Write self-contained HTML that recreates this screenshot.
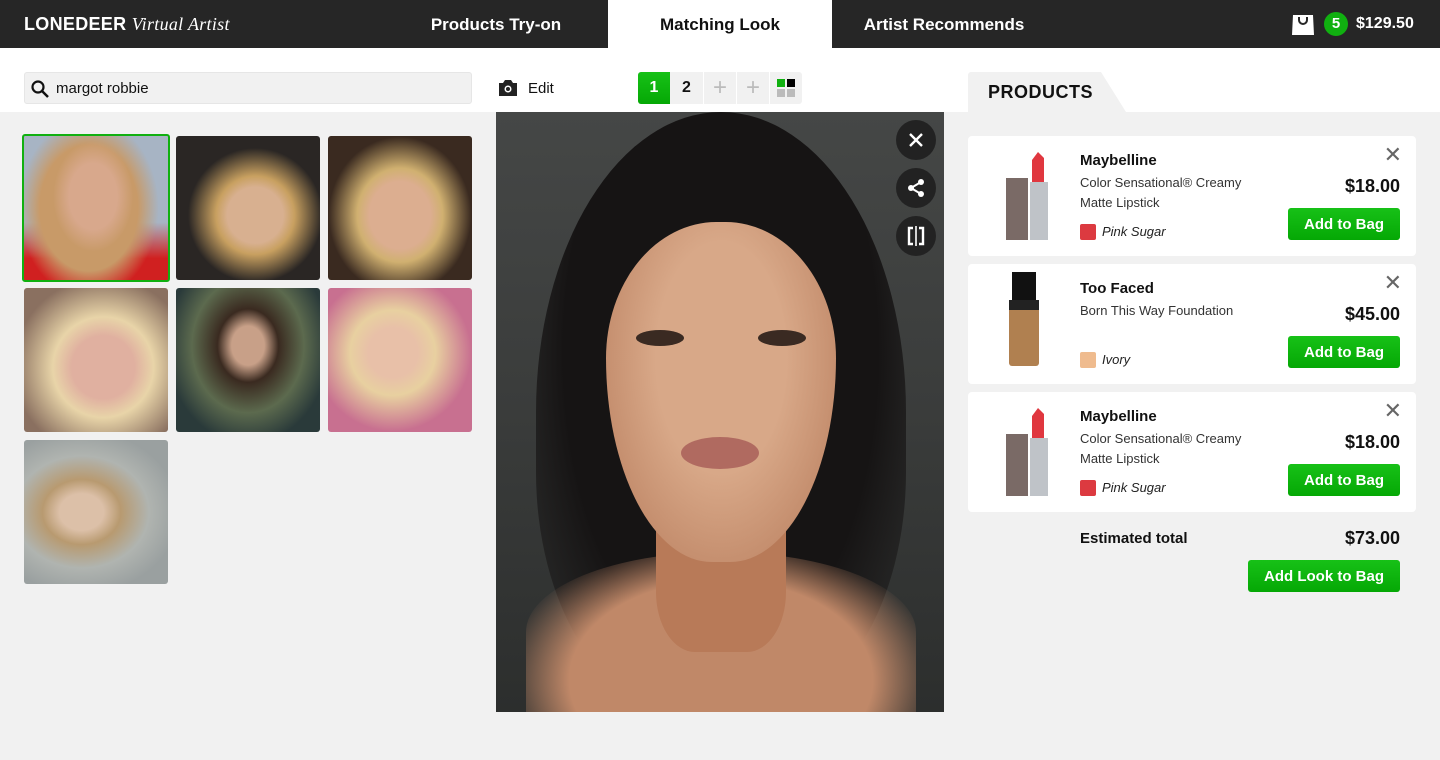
<!DOCTYPE html>
<html style="width:1440px;height:760px;overflow:hidden"><head><meta charset="utf-8"><style>
*{box-sizing:border-box;margin:0;padding:0}
body{width:1440px;height:760px;overflow:hidden;font-family:"Liberation Sans",sans-serif;background:#f1f1f1;position:relative;color:#111}
.hdr{position:absolute;left:0;top:0;width:1440px;height:48px;background:#262626;color:#fff}
.logo{position:absolute;left:24px;top:14px;font-size:18px;font-weight:bold;letter-spacing:.3px}
.logo i{font-family:"Liberation Serif",serif;font-weight:normal}
.nav{position:absolute;top:0;height:48px;width:224px;line-height:49px;text-align:center;font-size:17px;font-weight:bold}
.top{position:absolute;left:0;top:48px;width:1440px;height:64px;background:#fff}
.abs{position:absolute}
.thumb{position:absolute;width:144px;height:144px;border-radius:3px}
.card{position:absolute;left:968px;width:448px;height:120px;background:#fff;border-radius:4px}
.brand{position:absolute;left:112px;top:16px;font-size:15px;font-weight:bold}
.desc{position:absolute;left:112px;top:37px;font-size:13px;line-height:20px;color:#333;width:190px}
.sw{position:absolute;left:112px;top:88px;width:16px;height:16px;border-radius:2px}
.swn{position:absolute;left:134px;top:88px;font-size:13px;font-style:italic;color:#222}
.price{position:absolute;right:16px;top:40px;font-size:18px;font-weight:bold}
.btn{position:absolute;background:linear-gradient(#17c117,#05a805);color:#fff;font-size:15px;font-weight:bold;text-align:center;border-radius:3px}
.card .btn{right:16px;top:72px;width:112px;height:32px;line-height:33px}
.x{position:absolute;right:14px;top:6px;font-size:22px;color:#666}
.rb{position:absolute;left:896px;width:40px;height:40px;border-radius:50%;background:#222;color:#fff;text-align:center;line-height:40px}
</style></head><body>
<div class="hdr">
<div class="logo">LONEDEER <i>Virtual Artist</i></div>
<div class="nav" style="left:384px">Products Try-on</div>
<div class="nav" style="left:608px;background:#fff;color:#111">Matching Look</div>
<div class="nav" style="left:832px">Artist Recommends</div>
<svg class="abs" style="left:1291px;top:12px" width="24" height="24" viewBox="0 0 24 24"><path d="M2 3h20l1 20H1z" fill="#fff"/><path d="M8 5v3a4 4 0 0 0 8 0V5" stroke="#262626" stroke-width="2" fill="none"/></svg>
<div class="abs" style="left:1324px;top:12px;width:24px;height:24px;border-radius:50%;background:#10b010;font-size:15px;font-weight:bold;text-align:center;line-height:24px">5</div>
<div class="abs" style="left:1356px;top:15px;font-size:16px;font-weight:bold">$129.50</div>
</div>
<div class="top"></div>
<div class="abs" style="left:24px;top:72px;width:448px;height:32px;background:#f1f1f1;border-radius:3px;border:1px solid #e6e6e6"></div>
<svg class="abs" style="left:30px;top:79px" width="20" height="20" viewBox="0 0 20 20"><circle cx="8" cy="8" r="5.5" stroke="#111" stroke-width="2.2" fill="none"/><path d="M12 12l6 6" stroke="#111" stroke-width="2.5"/></svg>
<div class="abs" style="left:56px;top:80px;font-size:15px">margot robbie</div>
<svg class="abs" style="left:498px;top:79px" width="20" height="18" viewBox="0 0 20 18"><path d="M1 4h4l2-3h6l2 3h4v13H1z" fill="#222"/><circle cx="10" cy="10" r="3.5" fill="#fff"/><circle cx="10" cy="10" r="2" fill="#222"/></svg>
<div class="abs" style="left:528px;top:80px;font-size:15px">Edit</div>
<div class="abs" style="left:638px;top:72px;width:164px;height:32px;background:#f1f1f1;border-radius:3px"></div>
<div class="abs" style="left:638px;top:72px;width:32px;height:32px;background:linear-gradient(#17c117,#05a805);border-radius:3px 0 0 3px;color:#fff;font-weight:bold;font-size:16px;text-align:center;line-height:32px">1</div>
<div class="abs" style="left:670px;top:72px;width:33px;height:32px;font-weight:bold;font-size:16px;text-align:center;line-height:32px">2</div>
<div class="abs" style="left:703px;top:72px;width:1px;height:32px;background:#fff"></div>
<div class="abs" style="left:736px;top:72px;width:1px;height:32px;background:#fff"></div>
<div class="abs" style="left:769px;top:72px;width:1px;height:32px;background:#fff"></div>
<div class="abs" style="left:704px;top:72px;width:32px;height:32px;font-size:24px;color:#bbb;text-align:center;line-height:32px">+</div>
<div class="abs" style="left:737px;top:72px;width:32px;height:32px;font-size:24px;color:#bbb;text-align:center;line-height:32px">+</div>
<div class="abs" style="left:777px;top:79px;width:8px;height:8px;background:#10b010"></div>
<div class="abs" style="left:787px;top:79px;width:8px;height:8px;background:#000"></div>
<div class="abs" style="left:777px;top:89px;width:8px;height:8px;background:#bbb"></div>
<div class="abs" style="left:787px;top:89px;width:8px;height:8px;background:#bbb"></div>

<div class="thumb" style="left:22px;top:134px;width:148px;height:148px;border:2px solid #10b010;background:radial-gradient(ellipse 40px 55px at 48% 42%,#d8a88c 0 60%,transparent 100%),radial-gradient(ellipse 70px 90px at 45% 50%,#c89a68 0 70%,transparent 100%),linear-gradient(180deg,#a7b4c4 0%,#a7b4c4 60%,#d02020 85%)"></div>
<div class="thumb" style="left:176px;top:136px;background:radial-gradient(ellipse at 55% 55%,#d8b090 0 25%,#c8a060 35%,#2a2624 60%)"></div>
<div class="thumb" style="left:328px;top:136px;background:radial-gradient(ellipse at 50% 55%,#dcae90 0 30%,#d0b070 42%,#3a2a20 70%)"></div>
<div class="thumb" style="left:24px;top:288px;background:radial-gradient(ellipse at 55% 55%,#e0b0a0 0 28%,#e8d4a8 45%,#8a7060 80%)"></div>
<div class="thumb" style="left:176px;top:288px;background:radial-gradient(ellipse at 50% 40%,#c8a088 0 16%,#3a2a20 30%,#5c6a4e 55%,#2a3a3a 80%)"></div>
<div class="thumb" style="left:328px;top:288px;background:radial-gradient(ellipse at 45% 45%,#e8c0a8 0 22%,#e8d0a0 38%,#c87090 70%)"></div>
<div class="thumb" style="left:24px;top:440px;background:radial-gradient(ellipse at 40% 50%,#dcc0a8 0 18%,#b89a70 32%,#b0b4b0 55%,#9aa0a0 80%),linear-gradient(#aaa,#aaa)"></div>

<div class="abs" style="left:496px;top:112px;width:448px;height:600px;overflow:hidden;background:linear-gradient(180deg,#454746 0%,#3a3c3b 50%,#2c2e2d 100%)">
<div class="abs" style="left:40px;top:0px;width:370px;height:600px;border-radius:50% 50% 40% 40%;background:radial-gradient(ellipse at 50% 40%,#161414 0 60%,rgba(22,20,20,0) 100%)"></div>
<div class="abs" style="left:30px;top:440px;width:390px;height:160px;border-radius:50% 50% 0 0;background:radial-gradient(ellipse at 50% 80%,#c08868 0 55%,rgba(180,120,90,0) 80%)"></div>
<div class="abs" style="left:160px;top:340px;width:130px;height:200px;background:#b87a58;border-radius:30%"></div>
<div class="abs" style="left:110px;top:110px;width:230px;height:340px;border-radius:48% 48% 46% 46%/40% 40% 60% 60%;background:radial-gradient(ellipse at 50% 40%,#d8a888 0 40%,#c08868 80%,#a87050 100%)"></div>
<div class="abs" style="left:140px;top:218px;width:48px;height:16px;border-radius:50%;background:#3a2a22"></div>
<div class="abs" style="left:262px;top:218px;width:48px;height:16px;border-radius:50%;background:#3a2a22"></div>
<div class="abs" style="left:185px;top:325px;width:78px;height:32px;border-radius:50%;background:#b06a60"></div>
</div>
<div class="rb" style="top:120px"><svg width="16" height="16" viewBox="0 0 16 16" style="margin-top:12px"><path d="M2 2l12 12M14 2L2 14" stroke="#fff" stroke-width="2.4"/></svg></div>
<div class="rb" style="top:168px"><svg width="20" height="20" viewBox="0 0 20 20" style="margin-top:10px"><circle cx="15" cy="4" r="3" fill="#fff"/><circle cx="15" cy="16" r="3" fill="#fff"/><circle cx="5" cy="10" r="3" fill="#fff"/><path d="M15 4L5 10l10 6" stroke="#fff" stroke-width="2" fill="none"/></svg></div>
<div class="rb" style="top:216px"><svg width="20" height="20" viewBox="0 0 20 20" style="margin-top:10px"><path d="M7 2H3v16h4M13 2h4v16h-4" stroke="#fff" stroke-width="2.4" fill="none"/><path d="M10 0v20" stroke="#fff" stroke-width="1.6"/></svg></div>

<svg class="abs" style="left:968px;top:72px" width="160" height="40"><path d="M0 3a3 3 0 0 1 3-3h130l25 40H0z" fill="#f1f1f1"/></svg>
<div class="abs" style="left:988px;top:82px;font-size:18px;font-weight:bold;letter-spacing:.5px">PRODUCTS</div>

<div class="card" style="top:136px">
<svg class="abs" style="left:36px;top:16px" width="52" height="90"><rect x="2" y="26" width="22" height="62" fill="#7a6a66"/><rect x="26" y="30" width="18" height="58" fill="#bfc3c8"/><path d="M28 30V8l6-8 6 6v24z" fill="#e0373f"/></svg>
<div class="brand">Maybelline</div><div class="desc">Color Sensational® Creamy Matte Lipstick</div>
<div class="sw" style="background:#dc3a40"></div><div class="swn">Pink Sugar</div>
<div class="x">✕</div><div class="price">$18.00</div><div class="btn">Add to Bag</div></div>

<div class="card" style="top:264px">
<svg class="abs" style="left:38px;top:8px" width="36" height="96"><rect x="6" y="0" width="24" height="28" fill="#111"/><rect x="3" y="28" width="30" height="66" rx="3" fill="#b08050"/><rect x="3" y="28" width="30" height="10" fill="#222"/></svg>
<div class="brand">Too Faced</div><div class="desc">Born This Way Foundation</div>
<div class="sw" style="background:#efbb8e"></div><div class="swn">Ivory</div>
<div class="x">✕</div><div class="price">$45.00</div><div class="btn">Add to Bag</div></div>

<div class="card" style="top:392px">
<svg class="abs" style="left:36px;top:16px" width="52" height="90"><rect x="2" y="26" width="22" height="62" fill="#7a6a66"/><rect x="26" y="30" width="18" height="58" fill="#bfc3c8"/><path d="M28 30V8l6-8 6 6v24z" fill="#e0373f"/></svg>
<div class="brand">Maybelline</div><div class="desc">Color Sensational® Creamy Matte Lipstick</div>
<div class="sw" style="background:#dc3a40"></div><div class="swn">Pink Sugar</div>
<div class="x">✕</div><div class="price">$18.00</div><div class="btn">Add to Bag</div></div>

<div class="abs" style="left:1080px;top:530px;font-size:15px;font-weight:bold">Estimated total</div>
<div class="abs" style="left:1300px;top:528px;width:100px;text-align:right;font-size:18px;font-weight:bold">$73.00</div>
<div class="btn" style="left:1248px;top:560px;width:152px;height:32px;line-height:33px">Add Look to Bag</div>
</body></html>
